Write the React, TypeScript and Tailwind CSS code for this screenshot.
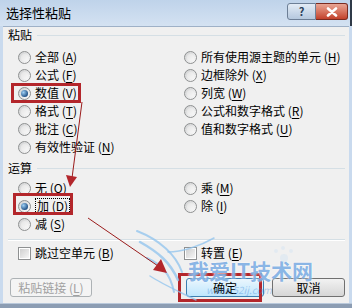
import React from 'react'

type ItemProps = {
  text: string
  hotkey: string
  checked?: boolean
  focused?: boolean
}

const Radio = ({ checked = false }: { checked?: boolean }) => (
  <span className="flex h-[13px] w-[13px] shrink-0 items-center justify-center rounded-full border border-[#8e9091] bg-gradient-to-br from-[#cfd0d1] to-[#fdfdfd]">
    {checked ? (
      <span className="h-[7px] w-[7px] rounded-full bg-[radial-gradient(circle_at_35%_35%,#9fd0f5,#1c4c82_75%)]" />
    ) : (
      <span className="h-[7px] w-[7px] rounded-full bg-gradient-to-br from-[#e4e4e4] to-[#f8f8f8]" />
    )}
  </span>
)

const Check = () => (
  <span className="flex h-[13px] w-[13px] shrink-0 items-center justify-center border border-[#8e9091] bg-white">
    <span className="h-[9px] w-[9px] bg-gradient-to-br from-[#cfcfcf] to-[#f6f6f6]" />
  </span>
)

const Hot = ({ text, hotkey }: { text: string; hotkey: string }) => (
  <>
    {text} (<span className="underline underline-offset-2">{hotkey}</span>)
  </>
)

const RadioItem = ({ text, hotkey, checked, focused }: ItemProps) => (
  <div className="flex h-[18px] items-center gap-[4px]">
    <Radio checked={checked} />
    <span className={focused ? 'border border-dotted border-black px-[1px] leading-[14px]' : 'leading-[14px]'}>
      <Hot text={text} hotkey={hotkey} />
    </span>
  </div>
)

const Header = ({ title }: { title: string }) => (
  <div className="flex h-[16px] items-center pl-[5px] pr-[4px]">
    <span>{title}</span>
    <span className="ml-[5px] h-px flex-1 bg-[#d5dfe5]" />
  </div>
)

const pasteRows: [ItemProps, ItemProps | null][] = [
  [{ text: '全部', hotkey: 'A' }, { text: '所有使用源主题的单元', hotkey: 'H' }],
  [{ text: '公式', hotkey: 'F' }, { text: '边框除外', hotkey: 'X' }],
  [{ text: '数值', hotkey: 'V', checked: true }, { text: '列宽', hotkey: 'W' }],
  [{ text: '格式', hotkey: 'T' }, { text: '公式和数字格式', hotkey: 'R' }],
  [{ text: '批注', hotkey: 'C' }, { text: '值和数字格式', hotkey: 'U' }],
  [{ text: '有效性验证', hotkey: 'N' }, null],
]

const opRows: [ItemProps, ItemProps | null][] = [
  [{ text: '无', hotkey: 'O' }, { text: '乘', hotkey: 'M' }],
  [{ text: '加', hotkey: 'D', checked: true, focused: true }, { text: '除', hotkey: 'I' }],
  [{ text: '减', hotkey: 'S' }, null],
]

const RadioGrid = ({ rows }: { rows: [ItemProps, ItemProps | null][] }) => (
  <div className="grid grid-cols-[166px_1fr] pl-[15px]">
    {rows.map(([left, right]) => (
      <React.Fragment key={left.text}>
        <RadioItem {...left} />
        {right ? <RadioItem {...right} /> : <div className="h-[18px]" />}
      </React.Fragment>
    ))}
  </div>
)

const App = () => {
  return (
    <div
      className="relative flex h-[308px] w-[352px] flex-col overflow-hidden bg-[#c9daee] text-[12px] text-black"
      style={{ fontFamily: '"Noto Sans CJK SC", "Noto Sans", sans-serif' }}
    >
      {/* title bar */}
      <div className="flex h-[26px] items-start border-r-2 border-[#2f3a48] bg-gradient-to-b from-[#bfd3ea] to-[#d4e2f2] pl-[6px]">
        <span className="mt-[5px] text-[13px] leading-[16px] text-black">选择性粘贴</span>
        <div className="ml-auto mr-[2px] mt-[3px] flex">
          <div className="flex h-[17px] w-[29px] items-center justify-center rounded-l-[3px] border border-[#6d7f96] bg-gradient-to-b from-[#e3ecf6] to-[#b5c8de] text-[11px] font-bold leading-none text-[#2b3e5a]">
            ?
          </div>
          <div className="flex h-[17px] w-[32px] items-center justify-center rounded-r-[3px] border border-l-0 border-[#7a2b20] bg-gradient-to-b from-[#e8a493] to-[#c2402a]">
            <svg width="12" height="10" viewBox="0 0 12 10">
              <path d="M2 1.5 L10 8.5 M10 1.5 L2 8.5" stroke="#fff" strokeWidth="2.6" strokeLinecap="round" />
            </svg>
          </div>
        </div>
      </div>

      {/* client area */}
      <div className="mx-[3px] flex flex-1 flex-col border-t border-[#9fb1c7] bg-[#f0f0f0]">
        <Header title="粘贴" />
        <div className="mt-[5px]">
          <RadioGrid rows={pasteRows} />
        </div>
        <div className="mt-[4px]">
          <Header title="运算" />
        </div>
        <div className="mt-[3px]">
          <RadioGrid rows={opRows} />
        </div>
        <div className="ml-[5px] mr-[4px] mt-[6px] border-t border-b border-t-[#d5dfe5] border-b-white" />
        <div className="mt-[3px] grid h-[18px] grid-cols-[166px_1fr] pl-[15px]">
          <div className="flex items-center gap-[4px]">
            <Check />
            <span>
              <Hot text="跳过空单元" hotkey="B" />
            </span>
          </div>
          <div className="flex items-center gap-[4px]">
            <Check />
            <span>
              <Hot text="转置" hotkey="E" />
            </span>
          </div>
        </div>
        <div className="mt-[16px] flex items-center pl-[7px] pr-[4px]">
          <div className="flex h-[19px] w-[82px] items-center justify-center rounded-[3px] border border-[#adb2b5] bg-[#f4f4f4] text-[#a0a0a0]">
            <Hot text="粘贴链接" hotkey="L" />
          </div>
          <div className="ml-auto flex h-[19px] w-[78px] items-center justify-center rounded-[3px] border border-[#3c7fb1] bg-gradient-to-b from-[#eaf6fd] to-[#bee6fd]">
            确定
          </div>
          <div className="ml-[8px] flex h-[19px] w-[73px] items-center justify-center rounded-[3px] border border-[#707070] bg-gradient-to-b from-[#f2f2f2] to-[#d6d6d6]">
            取消
          </div>
        </div>
      </div>

      {/* bottom frame */}
      <div className="h-[5px] border-t border-[#b9c8da] bg-[#8c9db3]" />

      {/* annotations laid over the dialog */}
      <div className="pointer-events-none absolute left-[11px] top-[83px] h-[20px] w-[70px] border-[3px] border-[#b3262b]" />
      <div className="pointer-events-none absolute left-[13px] top-[193px] h-[22px] w-[60px] border-[3px] border-[#b3262b]" />
      <div className="pointer-events-none absolute left-[178px] top-[273px] h-[29px] w-[84px] border-[3px] border-[#b3262b]" />

      <div
        className="pointer-events-none absolute left-[188px] top-[258px] text-[21px] font-bold leading-[24px] text-[#3d86d6]/60"
        style={{ textShadow: '0 0 2px #fff' }}
      >
        我爱IT技术网
      </div>
      <div className="pointer-events-none absolute left-[206px] top-[284px] text-[10px] italic leading-[12px] text-[#3d86d6]/40">
        www.52ij.com
      </div>

      <svg className="pointer-events-none absolute left-0 top-0" width="352" height="308" viewBox="0 0 352 308">
        <g fill="none" stroke="#8fc3ee" strokeOpacity="0.75" strokeLinecap="round">
          <path d="M137 231 C 160 240, 176 255, 182 272" strokeWidth="2" />
          <path d="M140 242 C 158 252, 170 262, 178 280" strokeWidth="2.5" />
          <path d="M147 258 C 160 264, 170 272, 174 292" strokeWidth="2" />
          <path d="M150 276 C 162 284, 176 290, 196 300" strokeWidth="1.5" />
          <path d="M168 252 C 182 252, 200 246, 214 238" strokeWidth="1.5" />
        </g>
        <g fill="#d8e6f2" fillOpacity="0.6">
          <circle cx="284" cy="258" r="4" />
          <circle cx="276" cy="251" r="2" />
          <circle cx="283" cy="248" r="2" />
          <circle cx="291" cy="251" r="2" />
        </g>
        <g stroke="#9b1c1c" strokeWidth="1" fill="#b3262b">
          <line x1="82" y1="102" x2="72" y2="178" />
          <polygon points="66,175 77,177 70,187" stroke="none" />
          <line x1="88" y1="218" x2="158" y2="266" />
          <polygon points="153,270 161,259 167,273" stroke="none" />
        </g>
      </svg>
    </div>
  )
}

export default App
